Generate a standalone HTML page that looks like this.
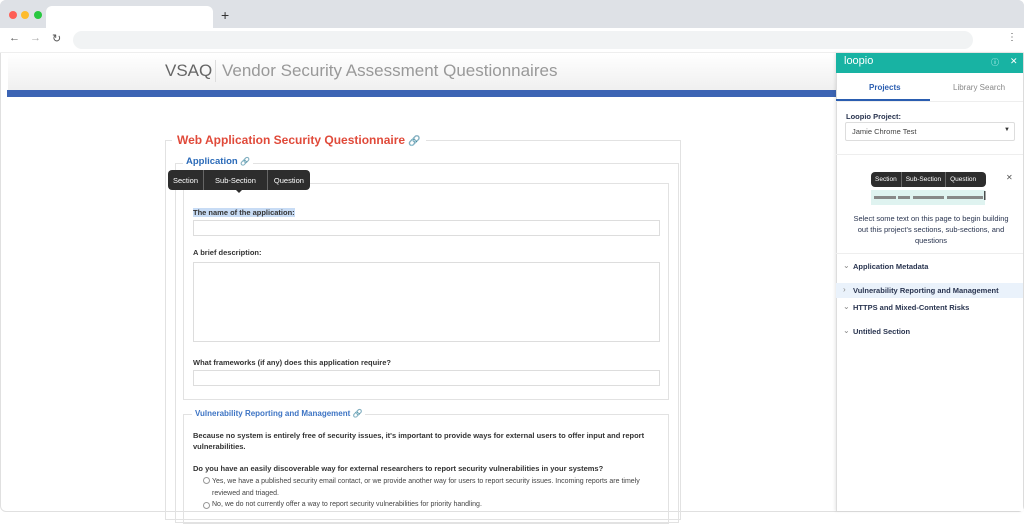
<!DOCTYPE html><html><head><style>
*{box-sizing:border-box;margin:0;padding:0}
body{width:1024px;height:512px;overflow:hidden;background:#fff;font-family:"Liberation Sans",sans-serif;position:relative}
.a{position:absolute}
.lbl{font-size:7.5px;font-weight:bold;color:#333}
.inp{border:1px solid #ddd;background:#fff}
.tt{background:#2d2d2d;color:#fff;font-size:7.5px;border-radius:4px;display:flex;align-items:center;white-space:nowrap}
.tt span{padding:0 6px;border-right:1px solid #666;height:100%;display:flex;align-items:center}
.tt span:last-child{border:none}
.it{font-size:7.5px;font-weight:bold;color:#2a3550;left:853px}
.ch{font-size:8px;color:#888;left:843px}
</style></head><body>
<div class="a" style="left:0;top:0;width:1024px;height:512px;border:1px solid #e0e0e0;border-radius:6px"></div>
<div class="a" style="left:0;top:0;width:1024px;height:28px;background:#dee1e6;border-radius:6px 6px 0 0"></div>
<div class="a" style="left:9px;top:11px;width:8px;height:8px;border-radius:50%;background:#fe5f57"></div>
<div class="a" style="left:21px;top:11px;width:8px;height:8px;border-radius:50%;background:#febc2e"></div>
<div class="a" style="left:34px;top:11px;width:8px;height:8px;border-radius:50%;background:#28c840"></div>
<div class="a" style="left:46px;top:6px;width:167px;height:22px;background:#fff;border-radius:6px 6px 0 0"></div>
<div class="a" style="left:221px;top:7px;font-size:14px;color:#333">+</div>
<div class="a" style="left:0;top:28px;width:1024px;height:25px;background:#fff;border-bottom:1px solid #eee"></div>
<div class="a" style="left:9px;top:32px;font-size:11px;color:#555">←</div>
<div class="a" style="left:30px;top:32px;font-size:11px;color:#aaa">→</div>
<div class="a" style="left:52px;top:32px;font-size:11px;color:#555">↻</div>
<div class="a" style="left:73px;top:31px;width:900px;height:18px;background:#f1f3f4;border-radius:9px"></div>
<div class="a" style="left:1007px;top:32px;font-size:10px;color:#555">⋮</div>
<div class="a" style="left:8px;top:54px;width:828px;height:37px;background:linear-gradient(#fff,#efefef)"></div>
<div class="a" style="left:165px;top:61px;font-size:17px;color:#666">VSAQ</div>
<div class="a" style="left:215px;top:60px;width:1px;height:22px;background:#ddd"></div>
<div class="a" style="left:222px;top:61px;font-size:17px;color:#999">Vendor Security Assessment Questionnaires</div>
<div class="a" style="left:7px;top:90px;width:829px;height:7px;background:#3c64b4"></div>

<div class="a" style="left:165px;top:140px;width:516px;height:380px;border:1px solid #e2e2e2"></div>
<div class="a" style="left:172px;top:133px;padding:0 5px;background:#fff;font-size:12px;font-weight:bold;color:#e04a3a">Web Application Security Questionnaire <span style="color:#999;font-weight:normal;font-size:10px">🔗</span></div>
<div class="a" style="left:175px;top:163px;width:504px;height:360px;border:1px solid #e2e2e2"></div>
<div class="a" style="left:183px;top:156px;padding:0 3px;background:#fff;font-size:9.5px;font-weight:bold;color:#2a6ab8">Application <span style="color:#999;font-weight:normal;font-size:8px">🔗</span></div>
<div class="a" style="left:183px;top:183px;width:486px;height:217px;border:1px solid #e2e2e2"></div>
<div class="a tt" style="left:168px;top:170px;width:142px;height:20px"><span style="padding:0 5px">Section</span><span style="padding:0 11px">Sub-Section</span><span>Question</span></div>
<div class="a" style="left:235px;top:189px;border:4px solid transparent;border-top-color:#2d2d2d"></div>
<div class="a lbl" style="left:193px;top:208px;background:#c8dcf5">The name of the application:</div>
<div class="a inp" style="left:193px;top:220px;width:467px;height:16px"></div>
<div class="a lbl" style="left:193px;top:248px">A brief description:</div>
<div class="a inp" style="left:193px;top:262px;width:467px;height:80px"></div>
<div class="a lbl" style="left:193px;top:358px">What frameworks (if any) does this application require?</div>
<div class="a inp" style="left:193px;top:370px;width:467px;height:16px"></div>
<div class="a" style="left:183px;top:414px;width:486px;height:110px;border:1px solid #e2e2e2"></div>
<div class="a" style="left:192px;top:409px;padding:0 3px;background:#fff;font-size:8px;font-weight:bold;color:#3d74c4">Vulnerability Reporting and Management <span style="color:#999;font-weight:normal">🔗</span></div>
<div class="a lbl" style="left:193px;top:430px;width:470px;line-height:11px">Because no system is entirely free of security issues, it's important to provide ways for external users to offer input and report vulnerabilities.</div>
<div class="a lbl" style="left:193px;top:464px">Do you have an easily discoverable way for external researchers to report security vulnerabilities in your systems?</div>
<div class="a" style="left:203px;top:477px;width:7px;height:7px;border:1px solid #999;border-radius:50%"></div>
<div class="a" style="left:212px;top:476px;font-size:7px;color:#444;width:440px;line-height:12px">Yes, we have a published security email contact, or we provide another way for users to report security issues. Incoming reports are timely reviewed and triaged.</div>
<div class="a" style="left:203px;top:502px;width:7px;height:7px;border:1px solid #999;border-radius:50%"></div>
<div class="a" style="left:212px;top:501px;font-size:7px;color:#444">No, we do not currently offer a way to report security vulnerabilities for priority handling.</div>

<div class="a" style="left:836px;top:53px;width:187px;height:458px;background:#fff;border-left:1px solid #ddd;box-shadow:-1px 0 3px rgba(0,0,0,.1)"></div>
<div class="a" style="left:836px;top:53px;width:187px;height:20px;background:#18b3a3"></div>
<div class="a" style="left:844px;top:55px;font-size:11px;color:#fff">loopio</div>
<div class="a" style="left:991px;top:57px;font-size:8px;color:#dff">ⓘ</div>
<div class="a" style="left:1010px;top:56px;font-size:9px;color:#fff">✕</div>
<div class="a" style="left:869px;top:83px;font-size:8px;font-weight:bold;color:#2a5db0">Projects</div>
<div class="a" style="left:953px;top:83px;font-size:8px;color:#888">Library Search</div>
<div class="a" style="left:836px;top:99px;width:94px;height:2px;background:#2a5db0"></div>
<div class="a" style="left:836px;top:101px;width:187px;height:1px;background:#eee"></div>
<div class="a" style="left:846px;top:112px;font-size:7.5px;font-weight:bold;color:#2a3550">Loopio Project:</div>
<div class="a" style="left:845px;top:122px;width:170px;height:19px;border:1px solid #ddd;border-radius:2px"></div>
<div class="a" style="left:852px;top:127px;font-size:7.5px;color:#444">Jamie Chrome Test</div>
<div class="a" style="left:1004px;top:127px;font-size:6px;color:#333">▼</div>
<div class="a" style="left:836px;top:154px;width:187px;height:1px;background:#eee"></div>
<div class="a tt" style="left:871px;top:172px;width:115px;height:15px;font-size:6.5px"><span style="padding:0 4px">Section</span><span style="padding:0 4px">Sub-Section</span><span style="padding:0 4px">Question</span></div>
<div class="a" style="left:871px;top:190px;width:114px;height:15px;background:#dff3f0"></div>
<div class="a" style="left:874px;top:196px;width:22px;height:3px;background:#888"></div>
<div class="a" style="left:898px;top:196px;width:12px;height:3px;background:#888"></div>
<div class="a" style="left:913px;top:196px;width:31px;height:3px;background:#888"></div>
<div class="a" style="left:947px;top:196px;width:36px;height:3px;background:#888"></div>
<div class="a" style="left:983px;top:188px;font-size:13px;color:#222">I</div>
<div class="a" style="left:1006px;top:173px;font-size:8px;color:#555">✕</div>
<div class="a" style="left:851px;top:213px;width:160px;font-size:7.5px;color:#2a3550;text-align:center;line-height:11px">Select some text on this page to begin building out this project's sections, sub-sections, and questions</div>
<div class="a" style="left:836px;top:253px;width:187px;height:1px;background:#eee"></div>
<div class="a ch" style="top:261px">⌄</div><div class="a it" style="top:262px">Application Metadata</div>
<div class="a" style="left:836px;top:283px;width:187px;height:15px;background:#eaf2fb"></div>
<div class="a ch" style="top:285px">›</div><div class="a it" style="top:286px">Vulnerability Reporting and Management</div>
<div class="a ch" style="top:302px">⌄</div><div class="a it" style="top:303px">HTTPS and Mixed-Content Risks</div>
<div class="a ch" style="top:326px">⌄</div><div class="a it" style="top:327px">Untitled Section</div>
</body></html>
